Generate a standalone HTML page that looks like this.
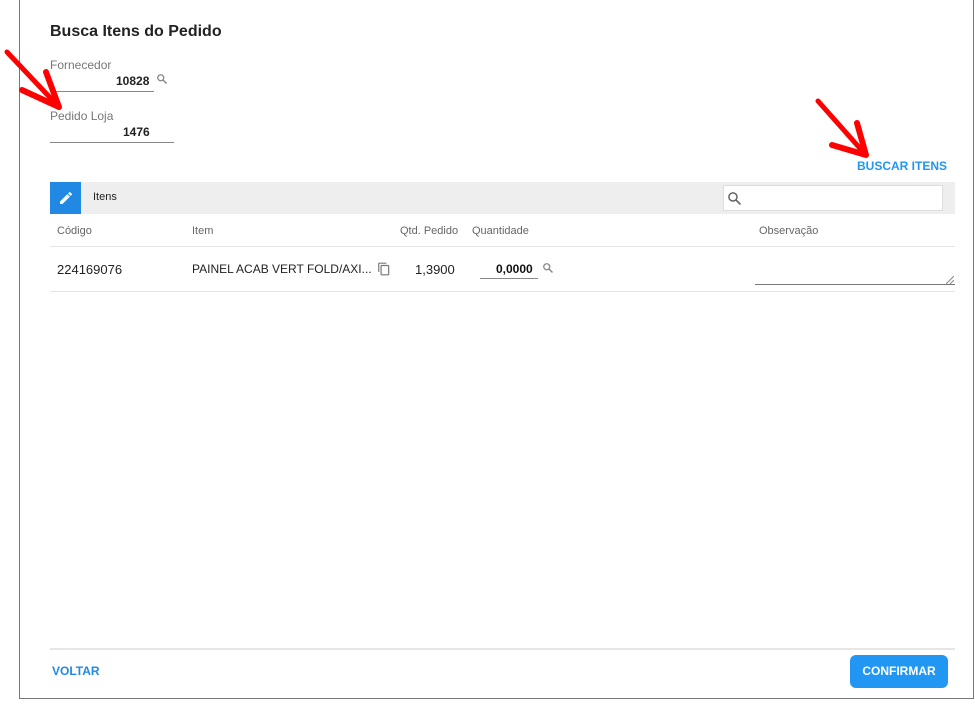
<!DOCTYPE html>
<html><head><meta charset="utf-8"><style>
*{margin:0;padding:0;box-sizing:border-box}
body{width:975px;height:705px;background:#fff;font-family:"Liberation Sans",sans-serif;position:relative;overflow:hidden;color:#222}
.frame{position:absolute;left:19px;top:-2px;width:955px;height:701px;border:1px solid #777;border-top:none;}
.a{position:absolute;white-space:nowrap}
.lbl{color:#777;font-size:12px}
.line{position:absolute;height:1px;background:#888}
.th{position:absolute;top:225px;font-size:11px;color:#666}
</style></head><body>
<div class="frame"></div>
<div class="a" style="left:50px;top:23px;font-size:16px;font-weight:bold;color:#222">Busca Itens do Pedido</div>
<div class="a lbl" style="left:50px;top:58px">Fornecedor</div>
<div class="a" style="left:116px;top:74px;font-size:12px;font-weight:bold">10828</div>
<svg class="a" style="left:156px;top:73px" width="12" height="12" viewBox="0 0 24 24"><circle cx="9.5" cy="9.5" r="6" fill="none" stroke="#888" stroke-width="2.6"/><path d="M14 14l7 7" stroke="#888" stroke-width="3"/></svg>
<div class="line" style="left:50px;top:91px;width:104px"></div>
<div class="a lbl" style="left:50px;top:109px">Pedido Loja</div>
<div class="a" style="left:123px;top:125px;font-size:12px;font-weight:bold">1476</div>
<div class="line" style="left:50px;top:142px;width:124px"></div>
<div class="a" style="left:857px;top:159px;font-size:12px;font-weight:bold;color:#2196f3">BUSCAR ITENS</div>
<div class="a" style="left:50px;top:182px;width:905px;height:32px;background:#eee"></div>
<div class="a" style="left:50px;top:182px;width:31px;height:32px;background:#2189e4"></div>
<svg class="a" style="left:58px;top:190px" width="16" height="16" viewBox="0 0 24 24"><path d="M3 17.25V21h3.75L17.8 9.94l-3.75-3.75L3 17.25zM20.7 7.04a1 1 0 000-1.41l-2.34-2.34a1 1 0 00-1.41 0l-1.83 1.830 3.75 3.75 1.83-1.83z" fill="#fff"/></svg>
<div class="a" style="left:93px;top:191px;font-size:11px;color:#222">Itens</div>
<div class="a" style="left:723px;top:185px;width:220px;height:26px;background:#fff;border:1px solid #ddd"></div>
<svg class="a" style="left:727px;top:191px" width="15" height="15" viewBox="0 0 24 24"><circle cx="9.5" cy="9.5" r="6.5" fill="none" stroke="#666" stroke-width="2.4"/><path d="M14.5 14.5l7 7" stroke="#666" stroke-width="2.8"/></svg>
<div class="th" style="left:57px">Código</div>
<div class="th" style="left:192px">Item</div>
<div class="th" style="left:400px">Qtd. Pedido</div>
<div class="th" style="left:472px">Quantidade</div>
<div class="th" style="left:759px">Observação</div>
<div class="line" style="left:50px;top:246px;width:905px;background:#e4e4e4"></div>
<div class="a" style="left:57px;top:262px;font-size:13px;color:#222">224169076</div>
<div class="a" style="left:192px;top:262px;font-size:12px;color:#222">PAINEL ACAB VERT FOLD/AXI...</div>
<svg class="a" style="left:377px;top:262px" width="14" height="14" viewBox="0 0 24 24"><path d="M16 1H4a2 2 0 00-2 2v14h2V3h12V1zm3 4H8a2 2 0 00-2 2v14a2 2 0 002 2h11a2 2 0 002-2V7a2 2 0 00-2-2zm0 16H8V7h11v14z" fill="#777"/></svg>
<div class="a" style="left:415px;top:262px;font-size:13px;color:#222">1,3900</div>
<div class="a" style="left:496px;top:262px;font-size:12px;font-weight:bold;color:#111">0,0000</div>
<div class="line" style="left:480px;top:278px;width:58px"></div>
<svg class="a" style="left:542px;top:262px" width="12" height="12" viewBox="0 0 24 24"><circle cx="9.5" cy="9.5" r="6" fill="none" stroke="#888" stroke-width="2.6"/><path d="M14 14l7 7" stroke="#888" stroke-width="3"/></svg>
<div class="line" style="left:755px;top:284px;width:200px;background:#777"></div>
<svg class="a" style="left:946px;top:276px" width="8" height="8" viewBox="0 0 8 8"><path d="M8 0L0 8M8 4L4 8" stroke="#888" stroke-width="1"/></svg>
<div class="line" style="left:50px;top:291px;width:905px;background:#e4e4e4"></div>
<div class="a" style="left:50px;top:648px;width:905px;height:2px;background:#e6e6e6"></div>
<div class="a" style="left:52px;top:664px;font-size:12px;font-weight:bold;color:#2189e4">VOLTAR</div>
<div class="a" style="left:850px;top:655px;width:98px;height:33px;background:#2196f3;border-radius:6px;color:#fff;font-size:12px;font-weight:bold;text-align:center;line-height:33px">CONFIRMAR</div>
<svg class="a" style="left:0;top:0" width="975" height="705">
<g stroke="#f00" stroke-width="5" stroke-linecap="round" stroke-linejoin="round" fill="none">
<path d="M7 52L58 106"/>
<path d="M818 101L865 154"/>
</g>
<g stroke="#f00" stroke-width="6" stroke-linecap="round" stroke-linejoin="round" fill="none">
<path d="M22 90L59 107L46 72"/>
<path d="M832 145L866 155L857 123"/>
</g></svg>
</body></html>
